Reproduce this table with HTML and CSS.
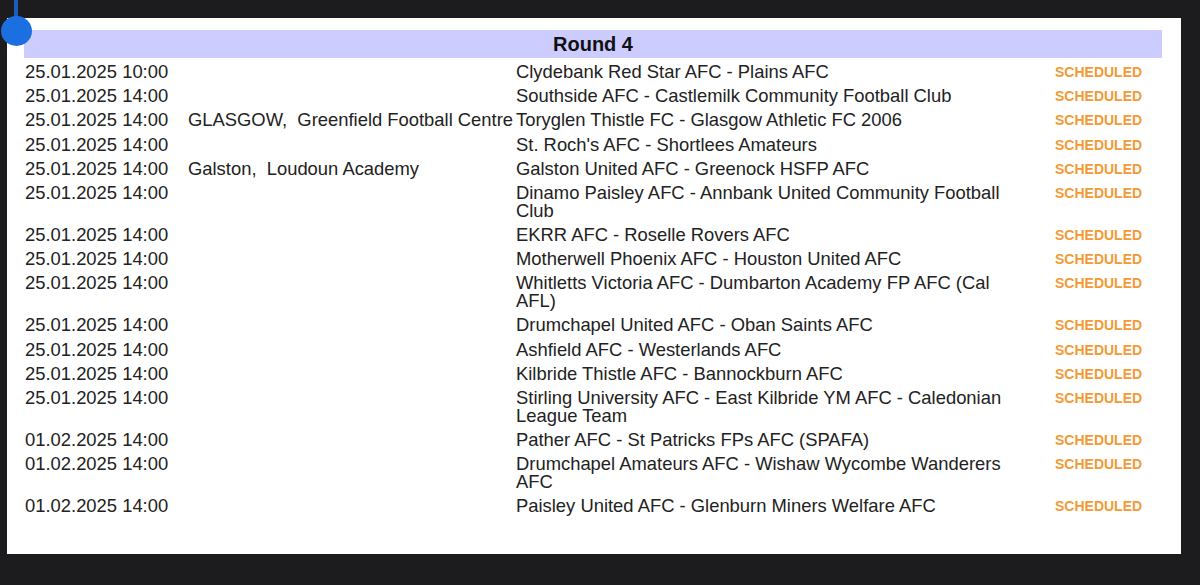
FILE: index.html
```html
<!DOCTYPE html>
<html lang="en">
<head>
<meta charset="utf-8">
<title>Round 4</title>
<link rel="stylesheet" href="styles.css">
</head>
<body>
<div class="marker"><span class="marker-line"></span><span class="marker-dot"></span></div>
<main class="sheet">
  <div class="round-head">Round 4</div>
  <table class="fixtures">
    <colgroup>
      <col class="c-date"><col class="c-venue"><col class="c-match"><col class="c-status">
    </colgroup>
    <tbody>
      <tr><td>25.01.2025 10:00</td><td></td><td>Clydebank Red Star AFC - Plains AFC</td><td class="status">SCHEDULED</td></tr>
      <tr><td>25.01.2025 14:00</td><td></td><td>Southside AFC - Castlemilk Community Football Club</td><td class="status">SCHEDULED</td></tr>
      <tr><td>25.01.2025 14:00</td><td class="venue">GLASGOW,&nbsp; Greenfield Football Centre</td><td>Toryglen Thistle FC - Glasgow Athletic FC 2006</td><td class="status">SCHEDULED</td></tr>
      <tr><td>25.01.2025 14:00</td><td></td><td>St. Roch's AFC - Shortlees Amateurs</td><td class="status">SCHEDULED</td></tr>
      <tr><td>25.01.2025 14:00</td><td class="venue">Galston,&nbsp; Loudoun Academy</td><td>Galston United AFC - Greenock HSFP AFC</td><td class="status">SCHEDULED</td></tr>
      <tr><td>25.01.2025 14:00</td><td></td><td>Dinamo Paisley AFC - Annbank United Community Football Club</td><td class="status">SCHEDULED</td></tr>
      <tr><td>25.01.2025 14:00</td><td></td><td>EKRR AFC - Roselle Rovers AFC</td><td class="status">SCHEDULED</td></tr>
      <tr><td>25.01.2025 14:00</td><td></td><td>Motherwell Phoenix AFC - Houston United AFC</td><td class="status">SCHEDULED</td></tr>
      <tr><td>25.01.2025 14:00</td><td></td><td>Whitletts Victoria AFC - Dumbarton Academy FP AFC (Cal AFL)</td><td class="status">SCHEDULED</td></tr>
      <tr><td>25.01.2025 14:00</td><td></td><td>Drumchapel United AFC - Oban Saints AFC</td><td class="status">SCHEDULED</td></tr>
      <tr><td>25.01.2025 14:00</td><td></td><td>Ashfield AFC - Westerlands AFC</td><td class="status">SCHEDULED</td></tr>
      <tr><td>25.01.2025 14:00</td><td></td><td>Kilbride Thistle AFC - Bannockburn AFC</td><td class="status">SCHEDULED</td></tr>
      <tr><td>25.01.2025 14:00</td><td></td><td>Stirling University AFC - East Kilbride YM AFC - Caledonian League Team</td><td class="status">SCHEDULED</td></tr>
      <tr><td>01.02.2025 14:00</td><td></td><td>Pather AFC - St Patricks FPs AFC (SPAFA)</td><td class="status">SCHEDULED</td></tr>
      <tr><td>01.02.2025 14:00</td><td></td><td>Drumchapel Amateurs AFC - Wishaw Wycombe Wanderers AFC</td><td class="status">SCHEDULED</td></tr>
      <tr><td>01.02.2025 14:00</td><td></td><td>Paisley United AFC - Glenburn Miners Welfare AFC</td><td class="status">SCHEDULED</td></tr>
    </tbody>
  </table>
</main>
</body>
</html>
```

FILE: styles.css
```css
html, body {
  margin: 0;
  padding: 0;
  background: #1c1c1e;
  height: 585px;
  overflow: hidden;
}

body {
  padding: 18px 19px 0 7px;
  font-family: "Liberation Sans", Arial, sans-serif;
  color: #222;
}

.marker {
  position: absolute;
  left: 0;
  top: 0;
  width: 34px;
  height: 48px;
  z-index: 2;
}

.marker-line {
  position: absolute;
  left: 14px;
  top: 0;
  width: 4px;
  height: 20px;
  background: #1c5fb8;
}

.marker-dot {
  position: absolute;
  left: 1px;
  top: 16px;
  width: 31px;
  height: 30px;
  border-radius: 50%;
  background: #1b6fe0;
}

.sheet {
  background: #fff;
  height: 536px;
  box-sizing: border-box;
  padding: 12px 19px 0 17px;
}

.round-head {
  height: 28px;
  background: #ccccff;
  text-align: center;
  font-weight: bold;
  font-size: 20px;
  line-height: 29px;
  color: #111;
}

.fixtures {
  width: 100%;
  table-layout: fixed;
  border-collapse: collapse;
  margin-top: 1.3px;
  font-size: 18.4px;
  line-height: 17.5px;
}

.c-date { width: 164px; }
.c-venue { width: 328px; }
.c-match { width: 539px; }

.fixtures td {
  padding: 3.4px 0;
  vertical-align: top;
}

.fixtures td:first-child {
  padding-left: 1px;
}

.fixtures td:nth-child(3) {
  padding-right: 30px;
}

.fixtures td.venue {
  white-space: nowrap;
  overflow: visible;
}

.fixtures td.status {
  padding: 4.4px 0 2.4px;
  font-size: 14px;
  font-weight: bold;
  color: #f39a34;
  white-space: nowrap;
}
```
